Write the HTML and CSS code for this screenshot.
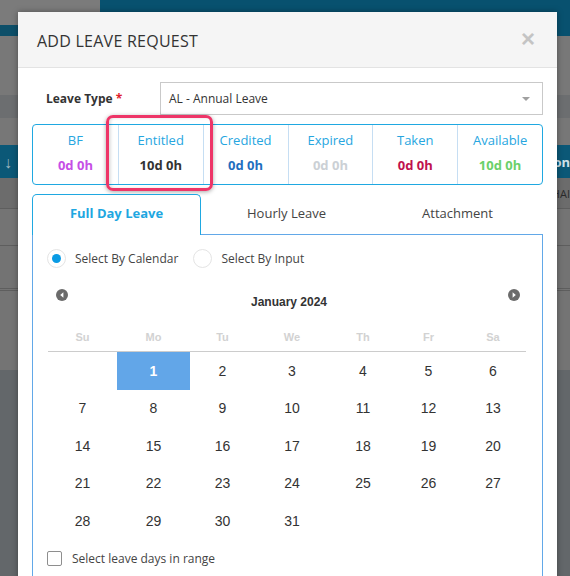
FILE: index.html
```html
<!DOCTYPE html>
<html>
<head>
<meta charset="utf-8">
<link rel="stylesheet" href="styles.css">
</head>
<body>
<div class="page">
  <div class="band-top">
    <div class="band-top-left"><div class="btl-gray"></div><div class="btl-teal"></div></div>
    <div class="band-top-right"></div>
  </div>
  <div class="band b1"></div>
  <div class="band b2"></div>
  <div class="band b3"></div>
  <div class="band b4"><span class="arrow-down">&#8595;</span><span class="on">on</span></div>
  <div class="band b5"><span class="hai">HAI</span></div>
  <div class="band b6"></div>
  <div class="band b7"></div>
  <div class="band b8"></div>
  <div class="band b9"></div>
</div>

<div class="modal">
  <div class="modal-header">
    <div class="modal-title">ADD LEAVE REQUEST</div>
    <div class="close">&times;</div>
  </div>
  <div class="modal-body">
    <div class="leave-row">
      <div class="leave-label">Leave Type <span class="req">*</span></div>
      <div class="select">
        <span>AL - Annual Leave</span>
        <span class="caret"></span>
      </div>
    </div>

    <div class="stats">
      <div class="stat"><div class="stat-label">BF</div><div class="stat-val v-bf">0d 0h</div></div>
      <div class="stat"><div class="stat-label">Entitled</div><div class="stat-val v-ent">10d 0h</div></div>
      <div class="stat"><div class="stat-label">Credited</div><div class="stat-val v-cred">0d 0h</div></div>
      <div class="stat"><div class="stat-label">Expired</div><div class="stat-val v-exp">0d 0h</div></div>
      <div class="stat"><div class="stat-label">Taken</div><div class="stat-val v-taken">0d 0h</div></div>
      <div class="stat"><div class="stat-label">Available</div><div class="stat-val v-avail">10d 0h</div></div>
    </div>

    <div class="tabs">
      <div class="tab active">Full Day Leave</div>
      <div class="tab">Hourly Leave</div>
      <div class="tab">Attachment</div>
    </div>
    <div class="panel">
      <div class="radio-row">
        <span class="radio checked"><span class="dot"></span></span>
        <span class="radio-label">Select By Calendar</span>
        <span class="radio second"></span>
        <span class="radio-label">Select By Input</span>
      </div>

      <div class="calendar">
        <div class="cal-nav">
          <svg class="nav-btn prev" width="12" height="12" viewBox="0 0 12 12"><circle cx="6" cy="6" r="6" fill="#6b6b6b"/><path d="M7.4 3.2 L4.2 6 L7.4 8.8 Z" fill="#fff"/></svg>
          <div class="month">January 2024</div>
          <svg class="nav-btn next" width="12" height="12" viewBox="0 0 12 12"><circle cx="6" cy="6" r="6" fill="#6b6b6b"/><path d="M4.6 3.2 L7.8 6 L4.6 8.8 Z" fill="#fff"/></svg>
        </div>
        <div class="cal-head">
          <div>Su</div><div>Mo</div><div>Tu</div><div>We</div><div>Th</div><div>Fr</div><div>Sa</div>
        </div>
        <div class="cal-grid">
          <div></div><div class="sel">1</div><div>2</div><div>3</div><div>4</div><div>5</div><div>6</div>
          <div>7</div><div>8</div><div>9</div><div>10</div><div>11</div><div>12</div><div>13</div>
          <div>14</div><div>15</div><div>16</div><div>17</div><div>18</div><div>19</div><div>20</div>
          <div>21</div><div>22</div><div>23</div><div>24</div><div>25</div><div>26</div><div>27</div>
          <div>28</div><div>29</div><div>30</div><div>31</div><div></div><div></div><div></div>
        </div>
      </div>

      <div class="check-row">
        <span class="checkbox"></span>
        <span class="check-label">Select leave days in range</span>
      </div>
    </div>
  </div>
  <div class="highlight"></div>
</div>
</body>
</html>
```

FILE: styles.css
```css
html, body {
  margin: 0;
  padding: 0;
}
body {
  width: 570px;
  height: 576px;
  overflow: hidden;
  position: relative;
  background: #63676a;
  font-family: "Open Sans", "Liberation Sans", sans-serif;
}

/* background page (behind the modal backdrop) */
.page {
  display: flex;
  flex-direction: column;
}
.band-top {
  display: flex;
  height: 36px;
}
.band-top-left {
  width: 100px;
  display: flex;
  flex-direction: column;
}
.btl-gray { height: 25px; background: #7b7b7b; }
.btl-teal { flex: 1; background: #0d4f69; }
.band-top-right { flex: 1; background: #08516f; }
.band { position: relative; }
.b1 { height: 59px; background: #787878; }
.b2 { height: 23px; background: #6c6e70; }
.b3 { height: 27px; background: #777777; }
.b4 {
  height: 33px;
  background: #0b5877;
  display: flex;
  align-items: center;
  justify-content: space-between;
  color: #d8e3e8;
}
.arrow-down { font-size: 16px; color: #9fb6c0; padding-left: 4px; }
.on { font-weight: 700; font-size: 13px; color: #cfe0e8; padding-right: 0; }
.b5 {
  height: 30px;
  background: #6c6c6c;
  display: flex;
  align-items: center;
  justify-content: flex-end;
}
.hai { font-size: 11px; color: #2a2a2a; }
.b6 { height: 36px; background: #747474; border-top: 1px solid #5e5e5e; }
.b7 { height: 42px; background: #737373; border-top: 1px solid #5e5e5e; }
.b8 { height: 79px; background: #747474; border-top: 3px double #5e5e5e; }
.b9 { flex: 1; background: #63676a; }

/* modal */
.modal {
  position: absolute;
  left: 18px;
  top: 12px;
  width: 539px;
  height: 620px;
  background: #fff;
  box-shadow: 0 0 6px rgba(0,0,0,0.35);
}
.modal-header {
  height: 56px;
  box-sizing: border-box;
  background: #f5f5f5;
  border-bottom: 1px solid #e3e3e3;
  display: flex;
  align-items: center;
  justify-content: space-between;
  padding: 0 22px 0 19px;
}
.modal-title {
  font-size: 16px;
  color: #333;
  letter-spacing: 0.25px;
  margin-top: 2px;
}
.close {
  font-family: "Liberation Sans", sans-serif;
  font-size: 24px;
  font-weight: 700;
  color: #c4c4c4;
  line-height: 1;
  margin-top: -2px;
}
.modal-body {
  padding: 14px 14px 0 14px;
}
.leave-row {
  display: flex;
  align-items: center;
}
.leave-label {
  width: 128px;
  box-sizing: border-box;
  padding-left: 14px;
  font-size: 12px;
  font-weight: 700;
  color: #333;
}
.req { color: #e0202b; }
.select {
  flex: 1;
  height: 33px;
  box-sizing: border-box;
  border: 1px solid #c9c9c9;
  display: flex;
  align-items: center;
  justify-content: space-between;
  padding: 0 12px 0 8px;
  font-size: 12px;
  color: #333;
}
.caret {
  width: 0;
  height: 0;
  border-left: 4px solid transparent;
  border-right: 4px solid transparent;
  border-top: 4px solid #a0a0a0;
}

.stats {
  margin-top: 9px;
  height: 61px;
  box-sizing: border-box;
  border: 1px solid #1fa8e1;
  border-radius: 4px;
  display: grid;
  grid-template-columns: repeat(6, 1fr);
}
.stat {
  text-align: center;
  border-left: 1px solid #c6def3;
}
.stat:first-child { border-left: none; }
.stat-label {
  margin-top: 6px;
  line-height: 18px;
  font-size: 13px;
  color: #27a6df;
}
.stat-val {
  margin-top: 7px;
  line-height: 18px;
  font-size: 13px;
  font-weight: 700;
}
.v-bf { color: #c64fe6; }
.v-ent { color: #333; }
.v-cred { color: #1f6fc0; }
.v-exp { color: #cbd0d5; }
.v-taken { color: #c0124e; }
.v-avail { color: #6bd06a; }

.highlight {
  position: absolute;
  left: 88px;
  top: 103px;
  width: 107px;
  height: 76px;
  box-sizing: border-box;
  border: 3px solid #ee3568;
  border-radius: 7px;
  box-shadow: 0 1px 4px rgba(0,0,0,0.35), inset 2px 0 3px rgba(0,0,0,0.12);
}

.tabs {
  margin-top: 9px;
  display: grid;
  grid-template-columns: 169px 1fr 1fr;
  height: 40px;
  position: relative;
  z-index: 1;
}
.tab {
  display: flex;
  align-items: center;
  justify-content: center;
  font-size: 13px;
  color: #444;
  padding-bottom: 4px;
  box-sizing: border-box;
}
.tab.active {
  background: #fff;
  border: 1px solid #1fa8e1;
  border-bottom: none;
  border-radius: 5px 5px 0 0;
  color: #1ea7e1;
  font-weight: 700;
  height: 41px;
}
.panel {
  border: 1px solid #62a8e8;
  height: 360px;
  box-sizing: border-box;
}
.radio-row {
  display: flex;
  align-items: center;
  padding: 14px 0 0 14px;
}
.radio {
  width: 19px;
  height: 19px;
  box-sizing: border-box;
  border: 1px solid #e4e4e4;
  border-radius: 50%;
  display: flex;
  align-items: center;
  justify-content: center;
}
.dot {
  width: 9px;
  height: 9px;
  border-radius: 50%;
  background: #0a9be4;
}
.radio.second { margin-left: 15px; }
.radio-label {
  margin-left: 9px;
  font-size: 12px;
  color: #444;
}

.calendar {
  padding: 0 16px 0 15px;
  margin-top: 21px;
}
.cal-nav {
  display: flex;
  align-items: flex-start;
  justify-content: space-between;
  height: 24px;
  padding: 0 6px 0 8px;
}
.month {
  padding-top: 6px;
  line-height: 14px;
  font-family: "Liberation Sans", sans-serif;
  font-size: 12px;
  font-weight: 700;
  color: #333;
  margin-left: 2px;
}
.cal-head, .cal-grid {
  display: grid;
  grid-template-columns: 69px 73px 65px 74px 68px 63px 66px;
  font-family: "Liberation Sans", sans-serif;
  text-align: center;
}
.cal-head {
  margin-top: 9px;
  height: 29px;
  align-items: center;
  border-bottom: 1px solid #cccccc;
  font-size: 11px;
  font-weight: 700;
  color: #d2d2d2;
}
.cal-grid {
  grid-auto-rows: 37.5px;
  font-size: 14px;
  color: #333;
}
.cal-grid > div {
  display: flex;
  align-items: center;
  justify-content: center;
}
.cal-grid .sel {
  background: #62a6e8;
  color: #fff;
  font-weight: 700;
}
.check-row {
  display: flex;
  align-items: center;
  padding-left: 14px;
  margin-top: 10px;
}
.checkbox {
  width: 15px;
  height: 15px;
  box-sizing: border-box;
  border: 1px solid #8e8e8e;
  border-radius: 2px;
}
.check-label {
  margin-left: 10px;
  font-size: 12px;
  color: #444;
}
```
